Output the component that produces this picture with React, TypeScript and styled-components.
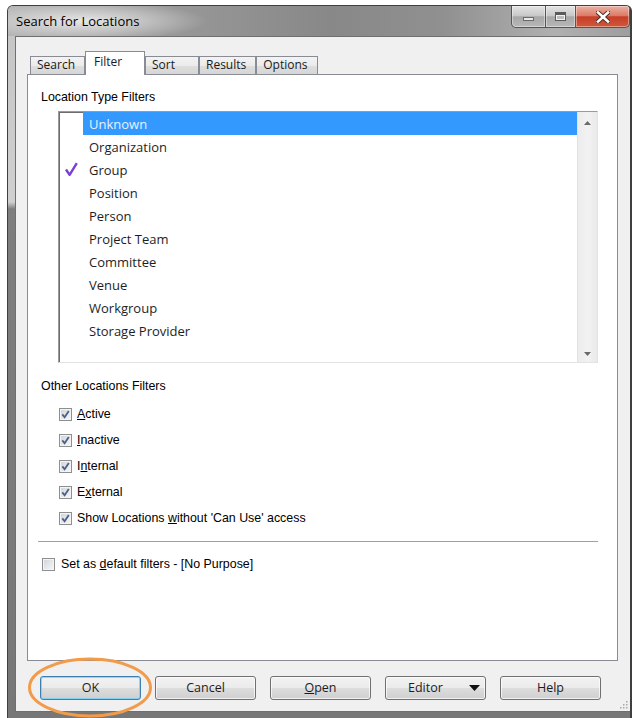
import React from "react";
import styled, { createGlobalStyle } from "styled-components";

const uiFont = `"Open Sans", "Noto Sans", sans-serif`;
const classicFont = `"Liberation Sans", Arial, sans-serif`;

const GlobalStyle = createGlobalStyle`
  *, *::before, *::after {
    box-sizing: border-box;
  }
  html, body {
    margin: 0;
    padding: 0;
    background: #ffffff;
    overflow: hidden;
  }
`;

const Window = styled.div`
  position: relative;
  width: 625px;
  height: 713px;
  margin: 5px 0 0 7px;
  display: flex;
  flex-direction: column;
  border: 1px solid #3f3f3f;
  border-right-width: 2px;
  border-bottom: none;
  border-radius: 6px 6px 0 0;
  overflow: hidden;
  background: linear-gradient(180deg, #c4c4c4 0px, #d0d0d0 196px, #7e7e7e 203px, #777777 100%);
`;

const TitleBar = styled.div`
  height: 30px;
  flex-shrink: 0;
  display: flex;
  align-items: flex-start;
  justify-content: space-between;
  background:
    radial-gradient(ellipse 125px 20px at 74px 15px, rgba(234, 234, 234, 0.95), rgba(234, 234, 234, 0) 100%),
    linear-gradient(90deg, #b0b0b0 0%, #979797 28%, #888888 52%, #909090 70%, #b0b0b0 88%, #9e9e9e 100%);
`;

const Title = styled.span`
  padding: 7px 0 0 8px;
  font: 13px/17px ${uiFont};
  color: #000000;
`;

const CaptionGroup = styled.div`
  display: flex;
`;

const CaptionButton = styled.div<{ $w: number; $close?: boolean; $first?: boolean }>`
  width: ${(p) => p.$w}px;
  height: 22px;
  margin-left: -1px;
  display: flex;
  align-items: center;
  justify-content: center;
  border: 1px solid #555555;
  border-top: none;
  border-radius: ${(p) => (p.$first ? "0 0 0 5px" : p.$close ? "0 0 5px 0" : "0")};
  background: ${(p) =>
    p.$close
      ? "linear-gradient(180deg, #eab0a2 0%, #dd7d68 45%, #c63f26 52%, #d0583a 100%)"
      : "linear-gradient(180deg, #e4e4e4 0%, #c9c9c9 45%, #a7a7a7 52%, #b8b8b8 100%)"};
  box-shadow: inset 0 0 0 1px rgba(255, 255, 255, 0.4);
`;

const MinGlyph = styled.div`
  width: 11px;
  height: 4px;
  margin-top: 5px;
  border: 1px solid #6a6a6a;
  background: #e8e8e8;
`;

const MaxGlyph = styled.div`
  width: 11px;
  height: 9px;
  border: 1px solid #5a5a5a;
  border-top-width: 3px;
  background: #bdbdbd;
  box-shadow: inset 0 0 0 1px #f2f2f2;
`;

const FrameBody = styled.div`
  flex: 1;
  min-height: 0;
  display: flex;
  padding: 0 0 6px 7px;
`;

const Client = styled.div`
  position: relative;
  flex: 1;
  display: flex;
  flex-direction: column;
  border-top: 1px solid #6f6f6f;
  border-left: 1px solid #6f6f6f;
  border-bottom: 1px solid #6f6f6f;
  background: #f0f0f0;
  padding: 14px 12px 0 11px;
`;

const TabStrip = styled.div`
  position: relative;
  z-index: 1;
  height: 24px;
  margin-bottom: -1px;
  padding-left: 3px;
  display: flex;
  align-items: flex-end;
`;

const Tab = styled.div<{ $active?: boolean }>`
  position: relative;
  z-index: ${(p) => (p.$active ? 2 : 1)};
  min-width: ${(p) => (p.$active ? 60 : 54)}px;
  height: ${(p) => (p.$active ? 24 : 18)}px;
  margin-bottom: ${(p) => (p.$active ? 0 : 1)}px;
  padding: ${(p) => (p.$active ? "2px 9px 0 8px" : "0 9px 0 6px")};
  border: 1px solid #898c95;
  border-bottom: none;
  background: ${(p) =>
    p.$active ? "#ffffff" : "linear-gradient(180deg, #f3f3f3 0%, #ebebeb 50%, #dedede 51%, #d6d6d6 100%)"};
  font: 12px/16px ${uiFont};
  color: #1a1a1a;
`;

const Panel = styled.div`
  height: 587px;
  flex-shrink: 0;
  display: flex;
  flex-direction: column;
  border: 1px solid #898c95;
  background: #ffffff;
`;

const GroupLabel = styled.div<{ $top: number }>`
  margin: ${(p) => p.$top}px 0 0 13px;
  font: 12.4px/16px ${classicFont};
  color: #000000;
`;

const ListBox = styled.div`
  width: 540px;
  height: 252px;
  margin: 6px 0 0 30px;
  display: flex;
  border: 1px solid;
  border-color: #9a9a9a #e3e3e3 #e3e3e3 #9a9a9a;
  box-shadow: inset 1px 1px 0 #6d6d6d;
  background: #ffffff;
`;

const Rows = styled.div`
  flex: 1;
  display: flex;
  flex-direction: column;
`;

const Row = styled.div`
  height: 23px;
  display: flex;
`;

const Gutter = styled.div`
  width: 24px;
  display: flex;
  align-items: center;
  padding-left: 6px;
`;

const ItemText = styled.div<{ $selected?: boolean }>`
  flex: 1;
  padding-left: 6px;
  font: 13px/24px ${uiFont};
  color: ${(p) => (p.$selected ? "#e6f1ff" : "#1e1e1e")};
  background: ${(p) => (p.$selected ? "#3399ff" : "transparent")};
`;

const ScrollTrack = styled.div`
  width: 20px;
  display: flex;
  flex-direction: column;
  align-items: center;
  justify-content: space-between;
  padding: 9px 0 6px;
  border-left: 1px solid #e2e2e2;
  background: linear-gradient(90deg, #ececec 0%, #f2f2f2 50%, #eaeaea 100%);
`;

const OptionList = styled.div`
  margin: 7px 0 0 31px;
  display: flex;
  flex-direction: column;
`;

const OptionRow = styled.div<{ $h?: number; $gap?: number }>`
  height: ${(p) => p.$h ?? 26}px;
  display: flex;
  align-items: center;
  gap: ${(p) => p.$gap ?? 5}px;
  font: 12.4px/16px ${classicFont};
  color: #000000;
`;

const Box = styled.div`
  width: 13px;
  height: 13px;
  flex-shrink: 0;
  display: flex;
  align-items: center;
  justify-content: center;
  border: 1px solid #8e8f8f;
  background: linear-gradient(135deg, #cfd2d7 0%, #e6e8ea 55%, #f7f7f7 100%);
  box-shadow: inset 0 0 0 1px #f4f4f4;
`;

const Separator = styled.div`
  width: 560px;
  height: 2px;
  margin: 10px 0 0 10px;
  border-top: 1px solid #a0a0a0;
  border-bottom: 1px solid #ffffff;
`;

const DefaultRow = styled(OptionRow)`
  margin: 11px 0 0 14px;
`;

const ButtonRow = styled.div`
  margin: 15px 0 0 13px;
  display: flex;
  gap: 14px;
`;

const Button = styled.div<{ $default?: boolean; $split?: boolean }>`
  width: 101px;
  height: 24px;
  display: flex;
  align-items: center;
  justify-content: ${(p) => (p.$split ? "space-between" : "center")};
  padding: ${(p) => (p.$split ? "0 5px 0 22px" : "0")};
  border: 1px solid ${(p) => (p.$default ? "#3c7fb1" : "#707070")};
  border-radius: 3px;
  background: linear-gradient(180deg, #f2f2f2 0%, #ebebeb 50%, #dddddd 51%, #cfcfcf 100%);
  box-shadow: inset 0 0 0 1px ${(p) => (p.$default ? "rgba(110, 205, 250, 0.75)" : "rgba(255, 255, 255, 0.7)")};
  font: 12.5px/16px ${uiFont};
  color: #1c1c1c;
`;

const Grip = styled.svg`
  position: absolute;
  right: 2px;
  bottom: 2px;
`;

const Ring = styled.svg`
  position: absolute;
  left: 20px;
  top: 651px;
  pointer-events: none;
`;

const locationTypes = [
  "Unknown",
  "Organization",
  "Group",
  "Position",
  "Person",
  "Project Team",
  "Committee",
  "Venue",
  "Workgroup",
  "Storage Provider",
];

const CheckGlyph = () => (
  <svg width="9" height="9" viewBox="0 0 9 9">
    <path d="M1.3 4.4 L3.6 7.2 L7.8 1" fill="none" stroke="#4b5f8a" strokeWidth="1.8" />
  </svg>
);

const Tick = () => (
  <svg width="13" height="15" viewBox="0 0 13 15">
    <path d="M1 7.5 L4.6 12.8 L11.8 1.2" fill="none" stroke="#7a3fd8" strokeWidth="2.4" strokeLinejoin="round" />
  </svg>
);

const Arrow = ({ down }: { down?: boolean }) => (
  <svg width="7" height="4" viewBox="0 0 7 4">
    <polygon points={down ? "0,0 7,0 3.5,4" : "0,4 7,4 3.5,0"} fill="#6a6a6a" />
  </svg>
);

const Check = ({ on }: { on?: boolean }) => <Box>{on && <CheckGlyph />}</Box>;

const App = () => {
  return (
    <>
      <GlobalStyle />
      <Window>
        <TitleBar>
          <Title>Search for Locations</Title>
          <CaptionGroup>
            <CaptionButton $w={35} $first>
              <MinGlyph />
            </CaptionButton>
            <CaptionButton $w={31}>
              <MaxGlyph />
            </CaptionButton>
            <CaptionButton $w={55} $close>
              <svg width="14" height="12" viewBox="0 0 14 12">
                <path d="M2 1.5 L12 10.5 M12 1.5 L2 10.5" stroke="#4a2a24" strokeWidth="4.4" strokeLinecap="square" />
                <path d="M2 1.5 L12 10.5 M12 1.5 L2 10.5" stroke="#ffffff" strokeWidth="2.6" strokeLinecap="square" />
              </svg>
            </CaptionButton>
          </CaptionGroup>
        </TitleBar>

        <FrameBody>
          <Client>
            <TabStrip>
              <Tab>Search</Tab>
              <Tab $active>Filter</Tab>
              <Tab>Sort</Tab>
              <Tab>Results</Tab>
              <Tab>Options</Tab>
            </TabStrip>

            <Panel>
              <GroupLabel $top={14}>Location Type Filters</GroupLabel>
              <ListBox>
                <Rows>
                  {locationTypes.map((name, i) => (
                    <Row key={name}>
                      <Gutter>{name === "Group" && <Tick />}</Gutter>
                      <ItemText $selected={i === 0}>{name}</ItemText>
                    </Row>
                  ))}
                </Rows>
                <ScrollTrack>
                  <Arrow />
                  <Arrow down />
                </ScrollTrack>
              </ListBox>

              <GroupLabel $top={15}>Other Locations Filters</GroupLabel>
              <OptionList>
                <OptionRow>
                  <Check on />
                  <span><u>A</u>ctive</span>
                </OptionRow>
                <OptionRow>
                  <Check on />
                  <span><u>I</u>nactive</span>
                </OptionRow>
                <OptionRow>
                  <Check on />
                  <span>I<u>n</u>ternal</span>
                </OptionRow>
                <OptionRow>
                  <Check on />
                  <span>E<u>x</u>ternal</span>
                </OptionRow>
                <OptionRow>
                  <Check on />
                  <span>Show Locations <u>w</u>ithout 'Can Use' access</span>
                </OptionRow>
              </OptionList>

              <Separator />

              <DefaultRow $h={20} $gap={6}>
                <Check />
                <span>Set as <u>d</u>efault filters - [No Purpose]</span>
              </DefaultRow>
            </Panel>

            <ButtonRow>
              <Button $default>OK</Button>
              <Button>Cancel</Button>
              <Button>
                <span><u>O</u>pen</span>
              </Button>
              <Button $split>
                <span>Editor</span>
                <svg width="11" height="6" viewBox="0 0 11 6">
                  <polygon points="0,0 11,0 5.5,6" fill="#111111" />
                </svg>
              </Button>
              <Button>Help</Button>
            </ButtonRow>

            <Grip width="9" height="9" viewBox="0 0 9 9">
              <rect x="7" y="1" width="1.5" height="1.5" fill="#a8a8a8" />
              <rect x="4" y="4" width="1.5" height="1.5" fill="#a8a8a8" />
              <rect x="7" y="4" width="1.5" height="1.5" fill="#a8a8a8" />
              <rect x="1" y="7" width="1.5" height="1.5" fill="#a8a8a8" />
              <rect x="4" y="7" width="1.5" height="1.5" fill="#a8a8a8" />
              <rect x="7" y="7" width="1.5" height="1.5" fill="#a8a8a8" />
            </Grip>
          </Client>
        </FrameBody>

        <Ring width="128" height="64" viewBox="0 0 128 64">
          <ellipse cx="62" cy="30.5" rx="60.5" ry="28.5" fill="none" stroke="#f29b4b" strokeWidth="3" />
        </Ring>
      </Window>
    </>
  );
};

export default App;
